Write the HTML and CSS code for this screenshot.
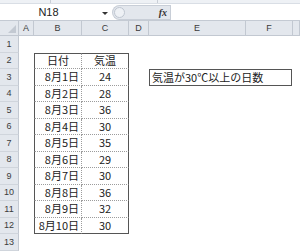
FILE: index.html
```html
<!DOCTYPE html>
<html lang="ja">
<head>
  <meta charset="UTF-8">
  <title>気温</title>
<link rel="stylesheet" href="styles.css"></head>
<body>
  <div class="ribbon">
    <span class="rib-line first"></span>
    <span class="rib-line second"></span>
  </div>
  <div class="formula-bar">
    <div class="name-box">N18</div>
    <span class="dropdown"></span>
    <div class="fx-box">
      <span class="knob"></span>
      <span class="fx">fx</span>
    </div>
    <div class="formula-input"></div>
  </div>

  <div class="sheet">
    <div class="row head">
      <div class="corner"></div>
      <div class="ch">A</div>
      <div class="ch">B</div>
      <div class="ch">C</div>
      <div class="ch">D</div>
      <div class="ch">E</div>
      <div class="ch">F</div>
      <div class="ch"></div>
    </div>
    <div class="row"><div class="rh">1</div></div>
    <div class="row">
      <div class="rh">2</div><div></div>
      <div class="cell date top center">日付</div>
      <div class="cell temp top">気温</div>
    </div>
    <div class="row">
      <div class="rh">3</div><div></div>
      <div class="cell date">8月1日</div>
      <div class="cell temp">24</div>
      <div></div>
      <div class="label-box">気温が30℃以上の日数</div>
    </div>
    <div class="row">
      <div class="rh">4</div><div></div>
      <div class="cell date">8月2日</div>
      <div class="cell temp">28</div>
    </div>
    <div class="row">
      <div class="rh">5</div><div></div>
      <div class="cell date">8月3日</div>
      <div class="cell temp">36</div>
    </div>
    <div class="row">
      <div class="rh">6</div><div></div>
      <div class="cell date">8月4日</div>
      <div class="cell temp">30</div>
    </div>
    <div class="row">
      <div class="rh">7</div><div></div>
      <div class="cell date">8月5日</div>
      <div class="cell temp">35</div>
    </div>
    <div class="row">
      <div class="rh">8</div><div></div>
      <div class="cell date">8月6日</div>
      <div class="cell temp">29</div>
    </div>
    <div class="row">
      <div class="rh">9</div><div></div>
      <div class="cell date">8月7日</div>
      <div class="cell temp">30</div>
    </div>
    <div class="row">
      <div class="rh">10</div><div></div>
      <div class="cell date">8月8日</div>
      <div class="cell temp">36</div>
    </div>
    <div class="row">
      <div class="rh">11</div><div></div>
      <div class="cell date">8月9日</div>
      <div class="cell temp">32</div>
    </div>
    <div class="row">
      <div class="rh">12</div><div></div>
      <div class="cell date last">8月10日</div>
      <div class="cell temp last">30</div>
    </div>
    <div class="row"><div class="rh">13</div></div>
  </div>
</body>
</html>
```

FILE: styles.css
```css
body {
  margin: 0;
  width: 300px;
  height: 252px;
  overflow: hidden;
  background-color: #fff;
  font-family: "Noto Sans CJK JP", "Noto Sans", sans-serif;
  color: #222;
}

/* bottom edge of the ribbon */
.ribbon {
  position: relative;
  height: 4px;
  background-color: #eef1f5;
  border-bottom: 1px solid #d9dee5;
  box-sizing: border-box;
}

.rib-line {
  position: absolute;
  top: 0;
  width: 1px;
  height: 3px;
  background-color: #c9ced6;
}

.rib-line.first {
  left: 50px;
}

.rib-line.second {
  left: 157px;
}

/* formula bar */
.formula-bar {
  display: flex;
  align-items: center;
  height: 16px;
  border-bottom: 1px solid #c4cad3;
  background-color: #fff;
}

.name-box {
  width: 97px;
  text-align: center;
  font-family: "Liberation Sans", Arial, sans-serif;
  font-size: 11px;
  color: #222;
}

.dropdown {
  width: 0;
  height: 0;
  margin-left: 5px;
  margin-top: 2px;
  border-left: 3px solid transparent;
  border-right: 3px solid transparent;
  border-top: 3px solid #333;
}

.fx-box {
  display: flex;
  align-items: center;
  justify-content: space-between;
  box-sizing: border-box;
  width: 58px;
  height: 15px;
  margin-left: 4px;
  padding: 0 3px 0 1px;
  background-color: #e3e7ed;
  border: 1px solid #c8ced7;
  border-right: none;
  border-radius: 8px 0 0 8px;
}

.knob {
  width: 11px;
  height: 11px;
  border-radius: 50%;
  background-color: #eef1f5;
  border: 1px solid #bfc6d0;
  box-sizing: border-box;
}

.fx {
  font-family: "Liberation Serif", serif;
  font-style: italic;
  font-weight: bold;
  font-size: 10px;
  color: #333;
}

.formula-input {
  flex: 1;
  height: 15px;
  border-left: 1px solid #c8ced7;
  background-color: #fff;
}

/* sheet grid */
.row {
  display: grid;
  grid-template-columns: 19px 15px 48px 47px 20px 97px 47px 1fr;
  height: 16.5px;
}

.row.head {
  height: 15px;
  background-color: #e3e7ed;
}

.corner {
  position: relative;
  border-right: 1px solid #c2c8d1;
  border-bottom: 1px solid #c2c8d1;
}

.corner::after {
  content: "";
  position: absolute;
  right: 2px;
  bottom: 2px;
  width: 0;
  height: 0;
  border-left: 8px solid transparent;
  border-bottom: 8px solid #c3c9d2;
}

.ch {
  display: flex;
  align-items: center;
  justify-content: center;
  border-right: 1px solid #c2c8d1;
  border-bottom: 1px solid #c2c8d1;
  font-family: "Liberation Sans", Arial, sans-serif;
  font-size: 9px;
  color: #3b3b3b;
}

.rh {
  display: flex;
  align-items: center;
  justify-content: center;
  background-color: #e3e7ed;
  border-right: 1px solid #c2c8d1;
  border-bottom: 1px solid #d0d5dc;
  font-family: "Liberation Sans", Arial, sans-serif;
  font-size: 9px;
  color: #3b3b3b;
}

/* the data table */
.cell {
  display: flex;
  align-items: center;
  box-sizing: border-box;
  font-size: 11px;
  line-height: 1;
  color: #222;
  border-bottom: 1px dotted #9c9c9c;
}

.cell.date {
  justify-content: flex-end;
  padding-right: 2px;
  border-left: 1px solid #555;
  border-right: 1px dotted #9c9c9c;
}

.cell.temp {
  justify-content: center;
  border-right: 1px solid #555;
}

.cell.date.center {
  justify-content: center;
  padding-right: 0;
}

.cell.top {
  border-top: 1px solid #555;
}

.cell.last {
  border-bottom: 1px solid #555;
}

.label-box {
  grid-column: span 2;
  display: flex;
  align-items: center;
  box-sizing: border-box;
  margin-right: 1px;
  padding-left: 2px;
  border: 1px solid #555;
  font-size: 11px;
  line-height: 1;
  color: #222;
}
```
